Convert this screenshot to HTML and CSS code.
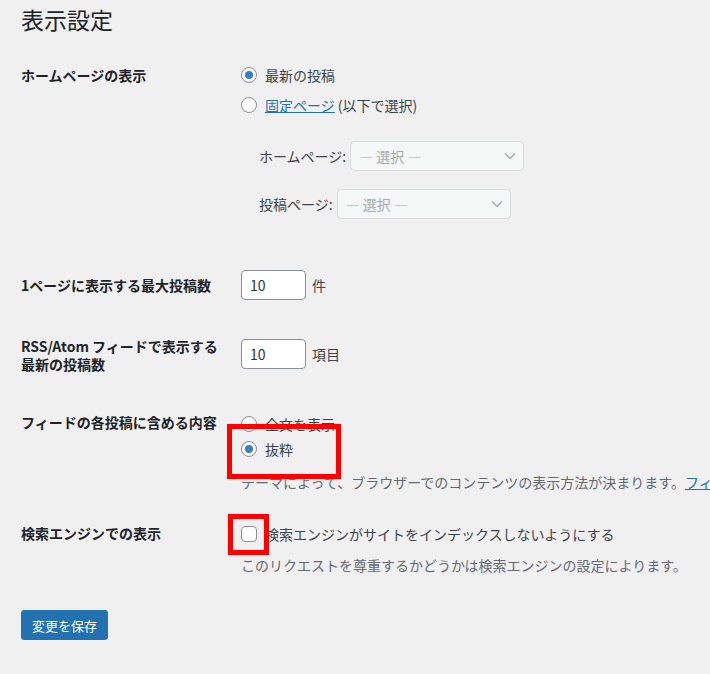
FILE: index.html
```html
<!DOCTYPE html>
<html lang="ja">
<head>
    <meta charset="UTF-8">
    <meta name="viewport" content="width=device-width, initial-scale=1.0">
    <title>表示設定</title>
    <link rel="stylesheet" href="styles.css">
</head>

<body>
    <div class="wrap">
        <h1>表示設定</h1>

        <div class="form-table">
            <!-- ホームページの表示 -->
            <div class="row row-front">
                <div class="th">ホームページの表示</div>
                <div class="td">
                    <label class="option"><span class="radio checked"></span>最新の投稿</label>
                    <label class="option"><span class="radio"></span><a href="#">固定ページ</a>&nbsp;(以下で選択)</label>
                    <div class="page-selects">
                        <div class="select-line">
                            <span>ホームページ:</span>
                            <div class="select">
                                <span>— 選択 —</span>
                                <svg width="12" height="8" viewBox="0 0 12 8"><path d="M1 1.5l5 5 5-5" fill="none" stroke="#a7aaad" stroke-width="1.4"/></svg>
                            </div>
                        </div>
                        <div class="select-line">
                            <span>投稿ページ:</span>
                            <div class="select">
                                <span>— 選択 —</span>
                                <svg width="12" height="8" viewBox="0 0 12 8"><path d="M1 1.5l5 5 5-5" fill="none" stroke="#a7aaad" stroke-width="1.4"/></svg>
                            </div>
                        </div>
                    </div>
                </div>
            </div>

            <!-- 1ページに表示する最大投稿数 -->
            <div class="row row-posts">
                <div class="th">1ページに表示する最大投稿数</div>
                <div class="td">
                    <div class="number-line"><div class="input">10</div><span>件</span></div>
                </div>
            </div>

            <!-- RSS -->
            <div class="row row-rss">
                <div class="th">RSS/Atom フィードで表示する<br>最新の投稿数</div>
                <div class="td">
                    <div class="number-line"><div class="input">10</div><span>項目</span></div>
                </div>
            </div>

            <!-- フィードの各投稿に含める内容 -->
            <div class="row row-feed">
                <div class="th">フィードの各投稿に含める内容</div>
                <div class="td">
                    <label class="option small"><span class="radio"></span>全文を表示</label>
                    <label class="option small"><span class="radio checked"></span>抜粋</label>
                    <p class="description nowrap">テーマによって、ブラウザーでのコンテンツの表示方法が決まります。<a href="#">フィードについての詳細</a></p>
                    <div class="highlight hl-feed"></div>
                </div>
            </div>

            <!-- 検索エンジンでの表示 -->
            <div class="row row-search">
                <div class="th">検索エンジンでの表示</div>
                <div class="td">
                    <label class="check-line"><span class="checkbox"></span>検索エンジンがサイトをインデックスしないようにする</label>
                    <p class="description">このリクエストを尊重するかどうかは検索エンジンの設定によります。</p>
                    <div class="highlight hl-search"></div>
                </div>
            </div>
        </div>

        <div class="submit">
            <button class="button-primary">変更を保存</button>
        </div>
    </div>
</body>
</html>
```

FILE: styles.css
```css
body {
    margin: 0;
    background-color: #f0f0f1;
    color: #3c434a;
    font-family: "Noto Sans CJK JP", "Noto Sans", sans-serif;
    font-size: 14px;
    overflow: hidden;
}

.wrap {
    padding: 5px 0 0 21px;
}

h1 {
    margin: 0 0 12px;
    font-size: 23px;
    font-weight: 400;
    line-height: 29px;
    color: #1d2327;
}

/* settings rows */
.row {
    display: grid;
    grid-template-columns: 220px auto;
    align-items: start;
}

.th {
    padding: 20px 10px 20px 0;
    font-weight: 700;
    line-height: 18px;
    color: #1d2327;
}

.td {
    position: relative;
    padding: 15px 0;
    line-height: 20px;
}

.row-front .td { padding: 14px 0 37px; }
.row-posts .td { padding: 14px 0 17px; }
.row-rss .td { padding: 22px 0 15px; }
.row-feed .td { padding: 18px 0 12px; }
.row-search .td { padding: 20px 0 15px; }

a {
    color: #2271b1;
    text-decoration: underline;
}

.option {
    display: flex;
    align-items: center;
    height: 30px;
    white-space: nowrap;
}

.option.small { height: 25px; }

.radio {
    box-sizing: border-box;
    width: 16px;
    height: 16px;
    margin-right: 8px;
    border: 1px solid #8c8f94;
    border-radius: 50%;
    background-color: #fff;
    display: flex;
    justify-content: center;
    align-items: center;
    flex-shrink: 0;
}

.radio.checked::before {
    content: "";
    width: 8px;
    height: 8px;
    border-radius: 50%;
    background-color: #3582c4;
}

.page-selects {
    margin: 21px 0 0 18px;
    display: flex;
    flex-direction: column;
    gap: 18px;
}

.select-line {
    display: flex;
    align-items: center;
}

.select {
    box-sizing: border-box;
    width: 174px;
    height: 30px;
    margin-left: 4px;
    padding: 0 7px 0 8px;
    border: 1px solid #dcdcde;
    border-radius: 4px;
    background-color: #f6f7f7;
    color: #a7aaad;
    display: flex;
    justify-content: space-between;
    align-items: center;
}

.number-line {
    display: flex;
    align-items: center;
    gap: 6px;
}

.input {
    box-sizing: border-box;
    width: 65px;
    height: 30px;
    padding: 0 8px;
    border: 1px solid #8c8f94;
    border-radius: 4px;
    background-color: #fff;
    color: #2c3338;
    display: flex;
    align-items: center;
}

.check-line {
    display: flex;
    align-items: center;
    height: 20px;
    white-space: nowrap;
}

.checkbox {
    box-sizing: border-box;
    width: 16px;
    height: 16px;
    margin-right: 8px;
    border: 1px solid #8c8f94;
    border-radius: 4px;
    background-color: #fff;
}

.description {
    margin: 11px 0 0;
    color: #646970;
    line-height: 20px;
}

.nowrap { white-space: nowrap; }

/* red marks drawn over the screenshot */
.highlight {
    position: absolute;
    box-sizing: border-box;
    border: 5px solid #ff0000;
}

.hl-feed {
    left: -14px;
    top: 31px;
    width: 114px;
    height: 55px;
}

.hl-search {
    left: -13px;
    top: 10px;
    width: 41px;
    height: 41px;
}

.submit {
    margin-top: 20px;
}

.button-primary {
    height: 30px;
    padding: 0 10px;
    border: 1px solid #2271b1;
    border-radius: 3px;
    background-color: #2271b1;
    color: #fff;
    font-family: inherit;
    font-size: 13px;
    cursor: pointer;
}
```
